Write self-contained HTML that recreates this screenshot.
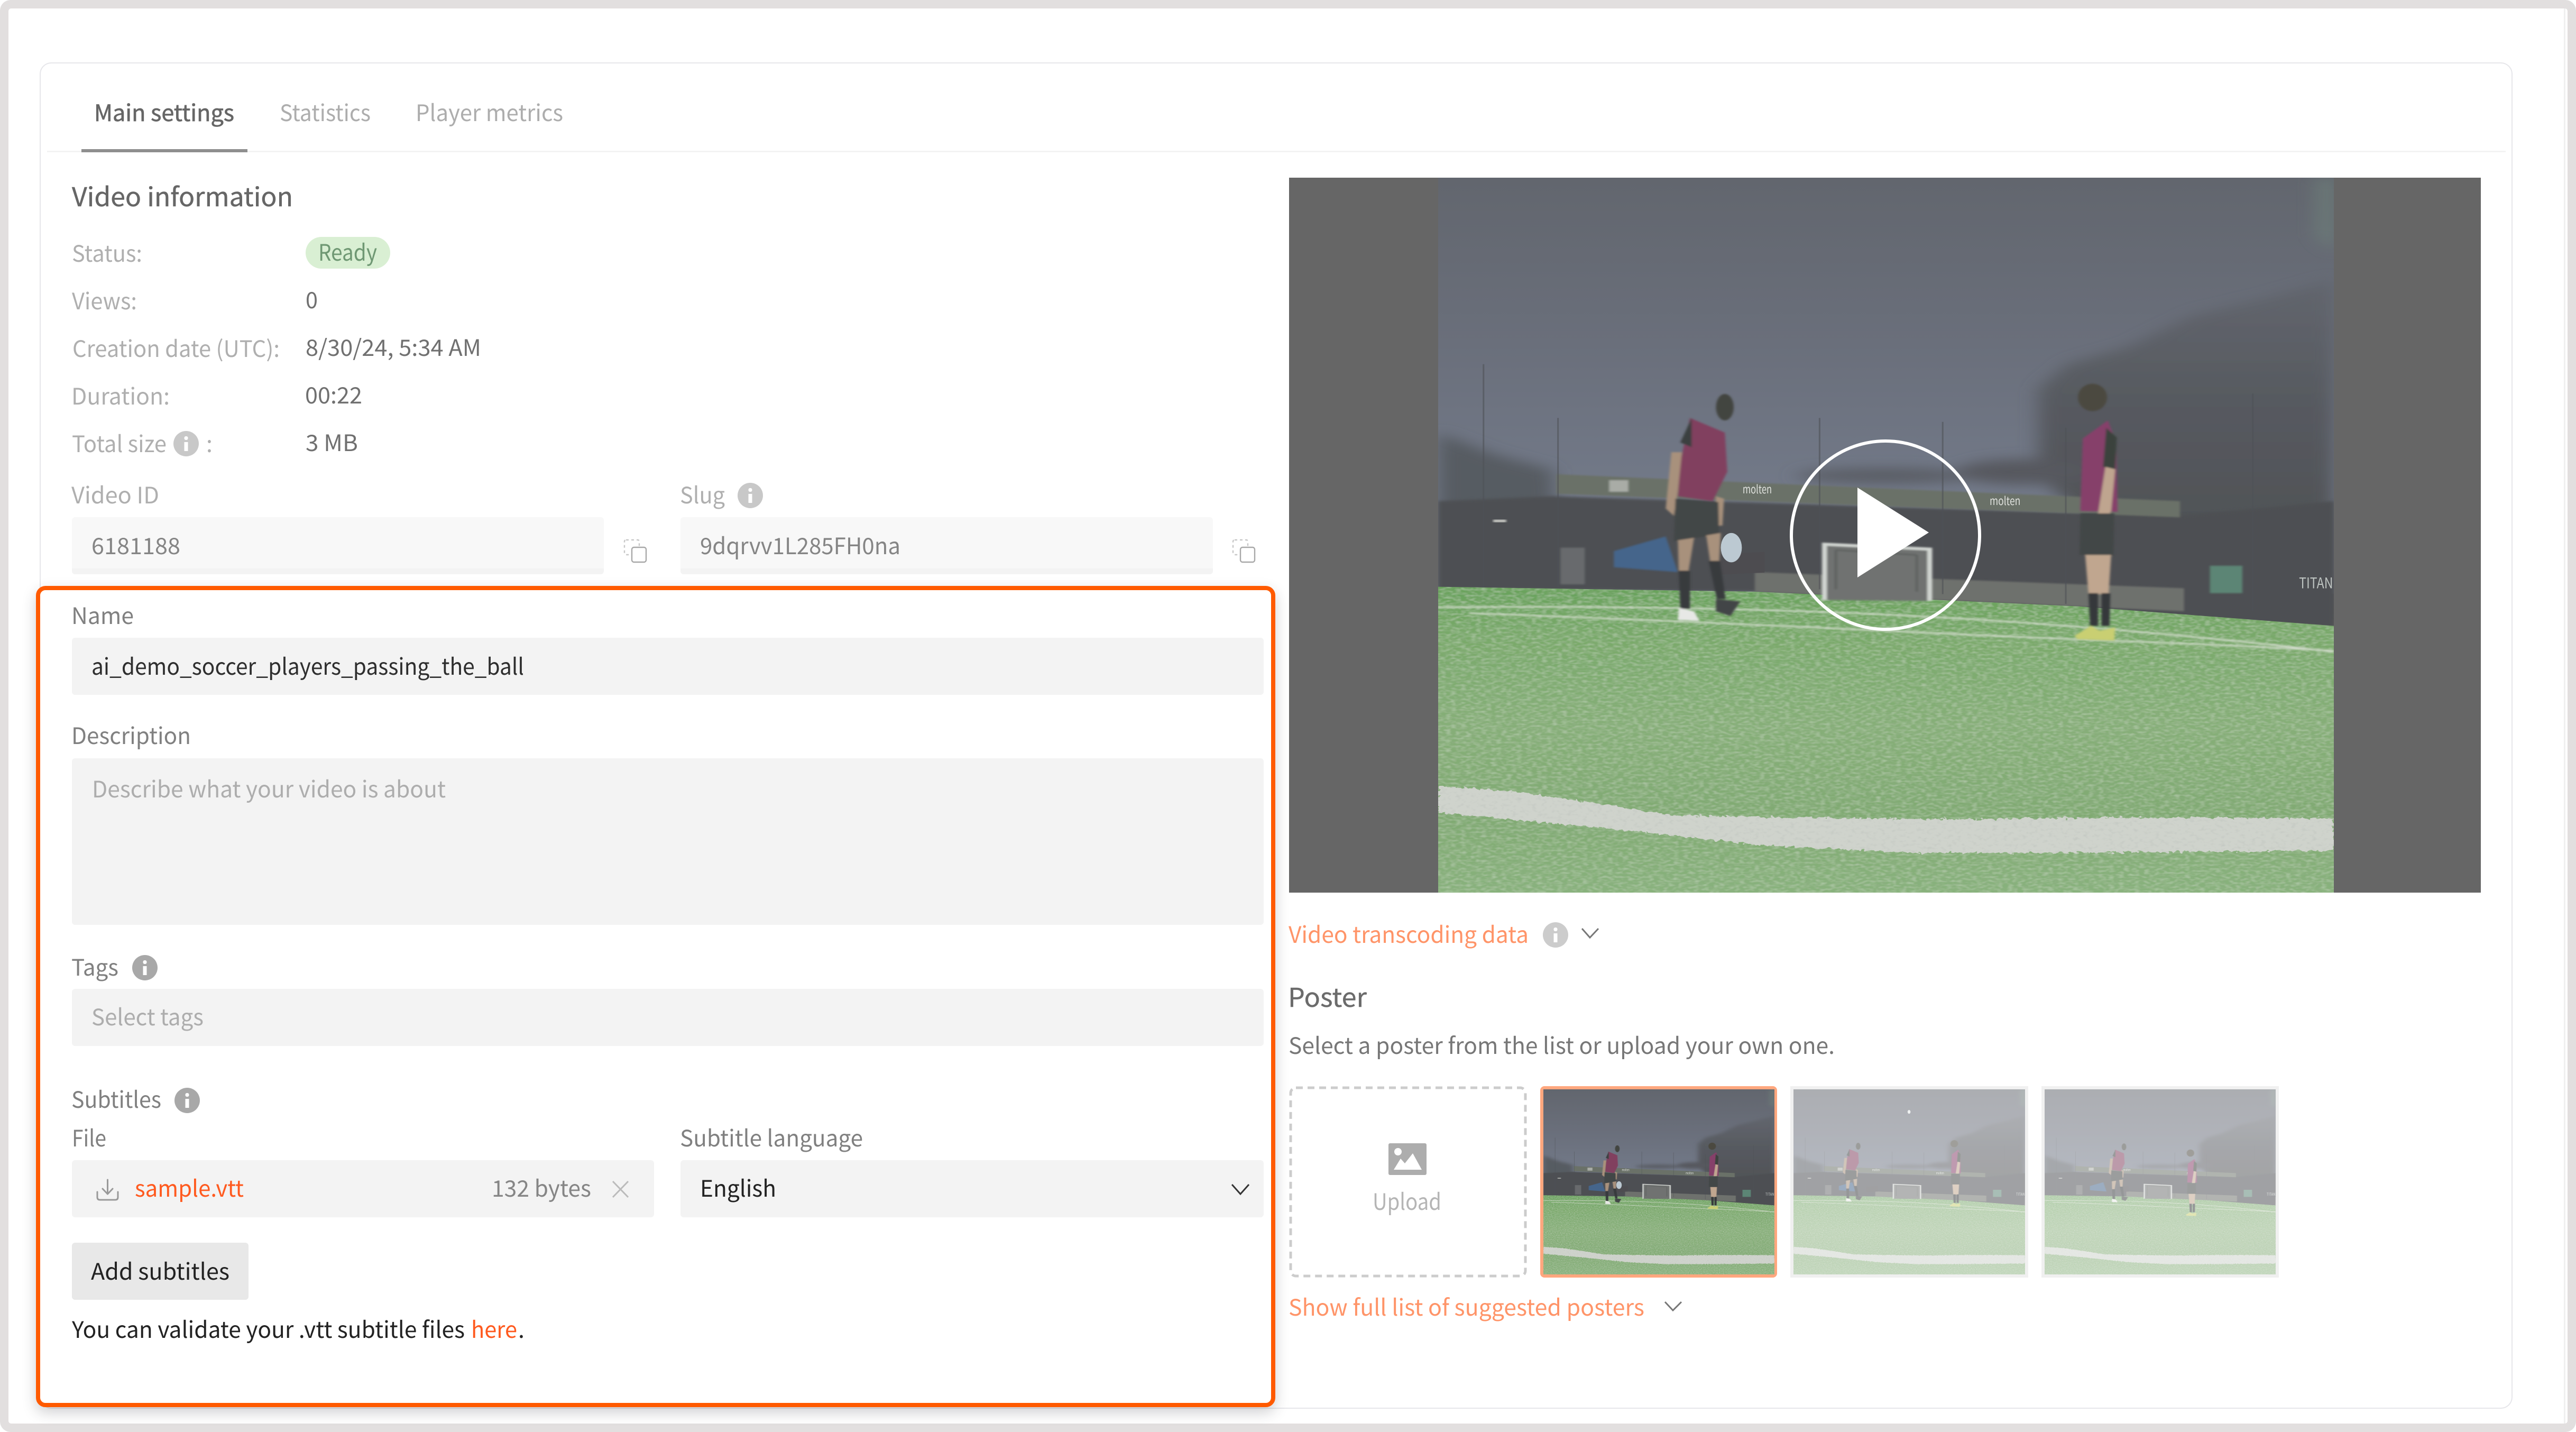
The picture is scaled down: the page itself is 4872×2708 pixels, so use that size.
<!DOCTYPE html>
<html><head><meta charset="utf-8"><title>Video settings</title>
<style>
html,body{margin:0;padding:0;background:#fff}
body{width:4872px;height:2708px;position:relative;overflow:hidden}
.a{position:absolute;box-sizing:border-box}
.f{border-radius:6px}
svg text{font-family:"Noto Sans CJK JP","Liberation Sans",sans-serif;font-size:43px}
</style></head><body>
<div class="a" style="left:0;top:0;width:4872px;height:2708px;background:#e2dfdf;border-radius:20px"></div>
<div class="a" style="left:16px;top:16px;width:4840px;height:2676px;background:#fff;border-radius:5px"></div>
<div class="a" style="left:4849px;top:16px;width:3px;height:2676px;background:#f0f0f0"></div>
<div class="a" style="left:75px;top:118px;width:4677px;height:2546px;border:2px solid #e6e6ea;border-radius:22px;background:#fff"></div>
<div class="a" style="left:89px;top:285px;width:4650px;height:3px;background:#f3f3f3"></div>
<div class="a" style="left:154px;top:282px;width:314px;height:6px;background:#8f8f8f"></div>
<div class="a" style="left:578px;top:448px;width:160px;height:60px;border-radius:30px;background:#d9efd3"></div>
<div class="a f" style="left:136px;top:978px;width:1006px;height:108px;background:linear-gradient(#f8f8f8 90%,#f3f3f3 90%)"></div>
<div class="a f" style="left:1287px;top:978px;width:1007px;height:108px;background:linear-gradient(#f8f8f8 90%,#f3f3f3 90%)"></div>
<div class="a" style="left:2438px;top:336px;width:2254px;height:1352px;background:#666"></div>

<div class="a" style="left:68px;top:1108px;width:2344px;height:1553px;border:8px solid #ff5a00;border-radius:18px;background:#fff;box-shadow:0 10px 26px rgba(40,40,50,.22)"></div>
<div class="a f" style="left:136px;top:1206px;width:2254px;height:108px;background:#f3f3f3"></div>
<div class="a f" style="left:136px;top:1434px;width:2254px;height:315px;background:#f3f3f3"></div>
<div class="a f" style="left:136px;top:1870px;width:2254px;height:108px;background:#f3f3f3"></div>
<div class="a f" style="left:136px;top:2194px;width:1101px;height:108px;background:#f3f3f3"></div>
<div class="a f" style="left:1287px;top:2194px;width:1103px;height:108px;background:#f3f3f3"></div>
<div class="a f" style="left:136px;top:2350px;width:334px;height:108px;background:#e8e8e8"></div>

<div class="a" style="left:2913px;top:2054px;width:448px;height:362px;background:#ffa77e;border-radius:8px"></div>
<div class="a" style="left:3386px;top:2054px;width:450px;height:362px;background:#f0f0f0"></div>
<div class="a" style="left:3861px;top:2054px;width:449px;height:362px;background:#f0f0f0"></div>

<svg class="a" style="left:0;top:0" width="4872" height="2708" viewBox="0 0 4872 2708" xmlns="http://www.w3.org/2000/svg">
<defs>
<linearGradient id="sky" x1="0" y1="0" x2="0" y2="1">
<stop offset="0" stop-color="#62666e"/><stop offset=".4" stop-color="#6a6f7b"/><stop offset=".75" stop-color="#727988"/><stop offset="1" stop-color="#707684"/>
</linearGradient>
<linearGradient id="tree" x1="0" y1="0" x2="0" y2="1">
<stop offset="0" stop-color="#62666e"/><stop offset=".35" stop-color="#575a60"/><stop offset="1" stop-color="#4a4d4f"/>
</linearGradient>
<linearGradient id="grass" x1="0" y1="0" x2="0" y2="1">
<stop offset="0" stop-color="#68a25b"/><stop offset=".15" stop-color="#78a969"/><stop offset=".45" stop-color="#86af78"/><stop offset=".75" stop-color="#80aa72"/><stop offset="1" stop-color="#88b27c"/>
</linearGradient>
<filter id="noise" x="0" y="0" width="100%" height="100%">
<feTurbulence type="fractalNoise" baseFrequency=".16 .24" numOctaves="3" seed="4"/>
<feGaussianBlur stdDeviation="1" result="n"/>
<feColorMatrix in="n" type="matrix" values="0 0 0 0 .32  0 0 0 0 .44  0 0 0 0 .28  1 0 0 0 -.42" result="d"/>
<feComposite in="d" in2="SourceAlpha" operator="in" result="dc"/>
<feColorMatrix in="n" type="matrix" values="0 0 0 0 .68  0 0 0 0 .78  0 0 0 0 .64  0 .9 0 0 -.38" result="l"/>
<feComposite in="l" in2="SourceAlpha" operator="in" result="lc"/>
<feMerge><feMergeNode in="SourceGraphic"/><feMergeNode in="dc"/><feMergeNode in="lc"/></feMerge>
</filter>
<filter id="rough" x="-5%" y="-20%" width="110%" height="140%">
<feTurbulence type="fractalNoise" baseFrequency=".16" numOctaves="2" seed="7" result="n"/>
<feDisplacementMap in="SourceGraphic" in2="n" scale="12" result="dm"/>
<feColorMatrix in="n" type="matrix" values="0 0 0 0 .5  0 0 0 0 .53  0 0 0 0 .5  1.4 0 0 0 -.72" result="sp"/>
<feComposite in="sp" in2="dm" operator="in" result="spc"/>
<feMerge><feMergeNode in="dm"/><feMergeNode in="spc"/></feMerge>
</filter>
<filter id="soft"><feGaussianBlur stdDeviation="1.6"/></filter>
<filter id="soft1"><feGaussianBlur stdDeviation="3"/></filter>
<filter id="soft2"><feGaussianBlur stdDeviation="12"/></filter>

<symbol id="bg" viewBox="209 39 1106 1461" preserveAspectRatio="none">
<rect x="209" y="39" width="1106" height="850" fill="url(#sky)"/>
<g filter="url(#soft2)">
<polygon points="1295,39 1315,39 1315,190 1295,160" fill="#6c7c78"/>
<polygon points="950,470 985,420 1060,385 1140,320 1230,285 1315,245 1315,960 1120,900 950,650" fill="url(#tree)"/>
<polygon points="209,560 280,605 350,635 360,880 209,880" fill="#575b62"/>
<ellipse cx="760" cy="648" rx="110" ry="16" fill="#5a5d65"/>
<ellipse cx="930" cy="640" rx="80" ry="26" fill="#56595f"/>
</g>
<g filter="url(#soft1)">
<polygon points="209,700 350,690 1125,730 1315,700 1315,960 600,885 209,880" fill="#4d5052"/>
</g>
<polygon points="355,645 1125,700 1125,733 355,685" fill="#6a7168" filter="url(#soft)"/>
<polygon points="600,845 1130,878 1130,925 600,885" fill="#6e716d" filter="url(#soft)"/>
<g stroke="#4f5257" stroke-width="2" fill="none" opacity=".6">
<path d="M265 420V880M357 530V880M680 530V880M832 538V890M984 550V910M1215 480V925"/>
</g>
<polygon points="426,835 426,802 490,772 505,845" fill="#44658b" filter="url(#soft)"/>
<rect x="360" y="795" width="30" height="75" fill="#676a6d" filter="url(#soft)"/>
<rect x="277" y="738" width="16" height="5" fill="#d5d7d0" filter="url(#soft)"/>
<rect x="420" y="657" width="24" height="24" fill="#a9aca6" filter="url(#soft)"/>
<rect x="1162" y="832" width="40" height="56" fill="#5c8575" filter="url(#soft)"/>
<text x="585" y="684" style="font-size:24px" fill="#dfe1dd" textLength="36" lengthAdjust="spacingAndGlyphs">molten</text>
<text x="890" y="708" style="font-size:24px" fill="#dfe1dd" textLength="38" lengthAdjust="spacingAndGlyphs">molten</text>
<text x="1272" y="878" style="font-size:30px" fill="#bfc5c2" textLength="42" lengthAdjust="spacingAndGlyphs">TITAN</text>
<polygon points="556,808 612,804 612,846 556,850" fill="#4d4c50"/>
<polygon points="209,875 600,885 1000,915 1315,955 1315,1500 209,1500" fill="url(#grass)" filter="url(#noise)"/>
<g fill="none" stroke="#d3dccd" stroke-width="3" filter="url(#soft)">
<path d="M209 917C400 914 600 918 800 935S1200 985 1315 1008"/>
<path d="M247 929C400 938 600 952 800 968S1150 990 1315 1006"/>
</g>
<g filter="url(#soft)">
<path d="M686 902V788L816 798V904" fill="#6f7271" stroke="#d2d6d2" stroke-width="6"/>
<path d="M700 800L800 810M700 800V880M800 810V885" stroke="#5d605f" stroke-width="3" fill="none"/>
</g>
<polygon points="209,1282 300,1293 400,1316 500,1342 700,1348 850,1350 1050,1346 1315,1348 1315,1414 1050,1418 800,1419 600,1402 450,1374 209,1337" fill="#cfd3cc" filter="url(#rough)"/>
</symbol>

<symbol id="pls" viewBox="209 39 1106 1461" preserveAspectRatio="none" overflow="visible">
<g id="p1" filter="url(#soft)">
<ellipse cx="563" cy="508" rx="11" ry="27" fill="#43443f"/>
<path d="M520 530L563 560L566 640L548 700L505 690L508 620Z" fill="#81405f"/>
<path d="M522 530L508 580L522 590Z" fill="#3b3f40"/>
<path d="M497 600L510 600L505 680L500 730L490 715Z" fill="#a8917c"/>
<path d="M552 690L562 695L560 750L552 750Z" fill="#a8917c"/>
<path d="M502 695L555 702L556 768L500 782Z" fill="#434647"/>
<path d="M505 780L525 775L518 845L506 845Z" fill="#a8917c"/>
<path d="M540 770L558 765L556 825L545 825Z" fill="#a8917c"/>
<path d="M506 842L520 842L520 920L508 920Z" fill="#383b3d"/>
<path d="M543 822L557 822L564 900L553 900Z" fill="#383b3d"/>
<path d="M506 918L525 925L532 945L505 943Z" fill="#e7e8e6"/>
<path d="M552 900L582 905L570 935L552 925Z" fill="#434546"/>
</g>
<g id="p2" filter="url(#soft)">
<ellipse cx="1017" cy="488" rx="18" ry="28" fill="#4b4940"/>
<path d="M1005 572L1036 535L1046 580L1048 722L1002 720Z" fill="#86406a"/>
<path d="M1034 550L1047 570L1045 635L1030 630Z" fill="#3a433c"/>
<path d="M1033 630L1045 635L1040 720L1028 760L1022 745Z" fill="#bfa58f"/>
<path d="M1002 725L1044 725L1043 812L1001 810Z" fill="#434646"/>
<path d="M1008 810L1040 810L1037 890L1012 890Z" fill="#c0a68f"/>
<path d="M1012 888L1024 888L1024 955L1014 955ZM1028 888L1039 888L1038 955L1028 955Z" fill="#35383a"/>
<path d="M995 975L1015 955L1026 965L1045 958L1044 985L998 982Z" fill="#c9cf72"/>
</g>
</symbol>
<symbol id="main" viewBox="209 39 1106 1461" preserveAspectRatio="none">
<use href="#bg" x="209" y="39" width="1106" height="1461"/>
<use href="#p1"/><use href="#p2"/>
<ellipse cx="571" cy="795" rx="13" ry="30" fill="#bcc9d2"/>
</symbol>
<symbol id="p2s" viewBox="209 39 1106 1461" preserveAspectRatio="none">
<use href="#bg" x="209" y="39" width="1106" height="1461"/>
<use href="#p1" transform="translate(-45 -20)"/><use href="#p2" transform="translate(-40 -20)"/>
<ellipse cx="761" cy="217" rx="7" ry="15" fill="#e0e4e4"/>
<rect x="209" y="39" width="1106" height="1461" fill="#fff" opacity=".47"/>
</symbol>
<symbol id="p3s" viewBox="209 39 1106 1461" preserveAspectRatio="none">
<use href="#bg" x="209" y="39" width="1106" height="1461"/>
<use href="#p1" transform="translate(26 -15)"/><use href="#p2" transform="translate(-110 54)"/>
<rect x="209" y="39" width="1106" height="1461" fill="#fff" opacity=".47"/>
</symbol>
<g id="info"><circle r="24" cx="0" cy="0"/><rect x="-3.5" y="-14" width="7" height="7" rx="3" fill="#fff"/><rect x="-3.5" y="-3" width="7" height="17" fill="#fff"/></g>
<g id="copy" fill="none"><rect x="1181" y="1021" width="28" height="28" rx="3" stroke="#c8c8c8" stroke-width="2.4" stroke-dasharray="5 5"/><rect x="1195" y="1035" width="27" height="28" rx="4" fill="#fff" stroke="#a8a8a8" stroke-width="2.4"/></g>
</defs>

<!-- video -->
<use href="#main" x="2720" y="336" width="1694" height="1352"/>
<circle cx="3566" cy="1012" r="178" fill="none" stroke="#fff" stroke-width="6"/>
<polygon points="3513,922 3648,1007 3513,1092" fill="#fff"/>

<!-- thumbnails -->
<use href="#main" x="2919" y="2060" width="437" height="350"/>
<use href="#p2s" x="3392" y="2060" width="438" height="350"/>
<use href="#p3s" x="3867" y="2060" width="437" height="350"/>
<rect x="2441" y="2057" width="444" height="356" rx="10" fill="#fff" stroke="#ccc" stroke-width="5" stroke-dasharray="13 9"/>
<rect x="2626" y="2162" width="72" height="60" rx="3" fill="#adadad"/>
<circle cx="2644" cy="2178" r="7" fill="#fff"/>
<polygon points="2636,2212 2649,2191 2657,2200 2672,2181 2689,2212" fill="#fff"/>

<!-- tabs -->
<text x="178" y="229" textLength="265" lengthAdjust="spacingAndGlyphs" fill="#666" stroke="#666" stroke-width=".7">Main settings</text>
<text x="529" y="229" textLength="172" lengthAdjust="spacingAndGlyphs" fill="#adadad">Statistics</text>
<text x="786" y="229" textLength="279" lengthAdjust="spacingAndGlyphs" fill="#adadad">Player metrics</text>
<text x="136" y="390" textLength="418" lengthAdjust="spacingAndGlyphs" fill="#666" stroke="#666" stroke-width=".5" style="font-size:49px">Video information</text>

<g fill="#afafaf">
<text x="136" y="495" textLength="133" lengthAdjust="spacingAndGlyphs">Status:</text>
<text x="136" y="585" textLength="123" lengthAdjust="spacingAndGlyphs">Views:</text>
<text x="137" y="675" textLength="392" lengthAdjust="spacingAndGlyphs">Creation date (UTC):</text>
<text x="135" y="765" textLength="186" lengthAdjust="spacingAndGlyphs">Duration:</text>
<text x="136" y="855" textLength="179" lengthAdjust="spacingAndGlyphs">Total size</text>
<text x="390" y="855">:</text>
<text x="135" y="952" textLength="166" lengthAdjust="spacingAndGlyphs">Video ID</text>
<text x="1286" y="952" textLength="85" lengthAdjust="spacingAndGlyphs">Slug</text>
</g>
<text x="602" y="493" textLength="111" lengthAdjust="spacingAndGlyphs" fill="#6f9873">Ready</text>
<g fill="#707070">
<text x="578" y="583" textLength="23" lengthAdjust="spacingAndGlyphs">0</text>
<text x="578" y="673" textLength="332" lengthAdjust="spacingAndGlyphs">8/30/24, 5:34 AM</text>
<text x="577" y="763" textLength="108" lengthAdjust="spacingAndGlyphs">00:22</text>
<text x="578" y="853" textLength="99" lengthAdjust="spacingAndGlyphs">3 MB</text>
</g>
<g fill="#858585">
<text x="173" y="1048" textLength="168" lengthAdjust="spacingAndGlyphs">6181188</text>
<text x="1324" y="1048" textLength="379" lengthAdjust="spacingAndGlyphs">9dqrvv1L285FH0na</text>
</g>
<use href="#info" x="352" y="839" fill="#c8c8c8"/>
<use href="#info" x="1419" y="937" fill="#c8c8c8"/>
<use href="#copy"/>
<use href="#copy" transform="translate(1151 0)"/>

<!-- highlighted form -->
<g fill="#808080">
<text x="135" y="1180" textLength="118" lengthAdjust="spacingAndGlyphs">Name</text>
<text x="135" y="1407" textLength="226" lengthAdjust="spacingAndGlyphs">Description</text>
<text x="135" y="1845" textLength="89" lengthAdjust="spacingAndGlyphs">Tags</text>
<text x="135" y="2095" textLength="170" lengthAdjust="spacingAndGlyphs">Subtitles</text>
<text x="136" y="2168" textLength="65" lengthAdjust="spacingAndGlyphs">File</text>
<text x="1286" y="2168" textLength="346" lengthAdjust="spacingAndGlyphs">Subtitle language</text>
</g>
<text x="173" y="1276" textLength="818" lengthAdjust="spacingAndGlyphs" fill="#2e2e2e">ai_demo_soccer_players_passing_the_ball</text>
<text x="174" y="1508" textLength="669" lengthAdjust="spacingAndGlyphs" fill="#adadad">Describe what your video is about</text>
<text x="173" y="1939" textLength="212" lengthAdjust="spacingAndGlyphs" fill="#adadad">Select tags</text>
<use href="#info" x="274" y="1830" fill="#a8a8a8"/>
<use href="#info" x="354" y="2081" fill="#a8a8a8"/>
<g fill="none" stroke="#999" stroke-width="3" stroke-linecap="round" stroke-linejoin="round">
<path d="M203.500 2231V2258M194 2248L203.500 2258L213 2248"/>
<path d="M184 2254V2264Q184 2269 189 2269H218Q223 2269 223 2264V2254"/>
</g>
<text x="255" y="2263" textLength="206" lengthAdjust="spacingAndGlyphs" fill="#ff5a1f">sample.vtt</text>
<text x="930" y="2263" textLength="188" lengthAdjust="spacingAndGlyphs" fill="#858585">132 bytes</text>
<path d="M1159 2234L1188 2264M1188 2234L1159 2264" stroke="#bbb" stroke-width="3" fill="none"/>
<text x="1324" y="2263" textLength="144" lengthAdjust="spacingAndGlyphs" fill="#222">English</text>
<path d="M2330 2240L2346 2258L2362 2240" stroke="#333" stroke-width="3" fill="none"/>
<text x="172" y="2420" textLength="262" lengthAdjust="spacingAndGlyphs" fill="#222">Add subtitles</text>
<text x="136" y="2530" textLength="743" lengthAdjust="spacingAndGlyphs" fill="#222">You can validate your .vtt subtitle files</text>
<text x="891" y="2530" textLength="87" lengthAdjust="spacingAndGlyphs" fill="#ff5a1f">here</text>
<text x="980" y="2530" fill="#222">.</text>

<!-- right column -->
<text x="2437" y="1783" textLength="454" lengthAdjust="spacingAndGlyphs" fill="#ff9468">Video transcoding data</text>
<use href="#info" x="2942" y="1768" fill="#ccc"/>
<path d="M2992 1756L3007 1773L3023 1756" stroke="#777" stroke-width="3" fill="none"/>
<text x="2436" y="1904" textLength="149" lengthAdjust="spacingAndGlyphs" fill="#6b6b6b" stroke="#6b6b6b" stroke-width=".4" style="font-size:49px">Poster</text>
<text x="2437" y="1993" textLength="1033" lengthAdjust="spacingAndGlyphs" fill="#777">Select a poster from the list or upload your own one.</text>
<text x="2596" y="2288" textLength="130" lengthAdjust="spacingAndGlyphs" fill="#b5b5b5">Upload</text>
<text x="2437" y="2488" textLength="673" lengthAdjust="spacingAndGlyphs" fill="#ff9468">Show full list of suggested posters</text>
<path d="M3149 2462L3164 2478L3180 2462" stroke="#777" stroke-width="3" fill="none"/>
</svg>
</body></html>
